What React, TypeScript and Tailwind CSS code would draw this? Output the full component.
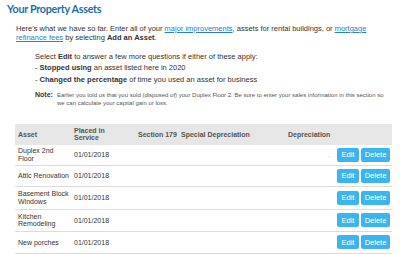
const rows = [
  { name: ["Duplex 2nd", "Floor"], date: "01/01/2018", dep: ".", h: "h-[21px]" },
  { name: ["Attic Renovation"], date: "01/01/2018", dep: "", h: "h-[21px]" },
  { name: ["Basement Block", "Windows"], date: "01/01/2018", dep: "", h: "h-[23px]" },
  { name: ["Kitchen", "Remodeling"], date: "01/01/2018", dep: "", h: "h-[22px]" },
  { name: ["New porches"], date: "01/01/2018", dep: "", h: "h-[22px]" },
];

const cols = "grid grid-cols-[59px_64px_43px_107px_49px_1fr] items-center";

const App = () => {
  return (
    <div className="h-[254px] w-[400px] overflow-hidden bg-white font-['Liberation_Sans',Arial,sans-serif] text-[#333]">
      <h1 className="pl-[7px] pt-[1px] font-['Lato',sans-serif] text-[10.8px] font-bold leading-[15px] tracking-[-0.3px] text-[#1d6fa5]">
        Your Property Assets
      </h1>

      <p className="mt-[8px] pl-[16px] pr-[20px] text-[7.5px] leading-[9px]">
        Here&apos;s what we have so far. Enter all of your{" "}
        <a className="text-[#2b7fcc] underline">major improvements</a>, assets for rental buildings, or{" "}
        <a className="text-[#2b7fcc] underline">mortgage refinance fees</a> by selecting{" "}
        <b>Add an Asset</b>.
      </p>

      <div className="mt-[9px] pl-[35px] text-[7.5px] leading-[11.3px]">
        <p>
          Select <b>Edit</b> to answer a few more questions if either of these apply:
        </p>
        <p>
          - <b>Stopped using</b> an asset listed here in 2020
        </p>
        <p>
          - <b>Changed the percentage</b> of time you used an asset for business
        </p>
      </div>

      <div className="mt-[6px] flex pl-[35px] pr-[10px] text-[6px] leading-[8px] text-[#555]">
        <b className="w-[22px] shrink-0 text-[7px] text-[#333]">Note:</b>
        <p>
          Earlier you told us that you sold (disposed of) your Duplex Floor 2. Be sure to enter your sales
          information in this section so we can calculate your capital gain or loss.
        </p>
      </div>

      <div className="ml-[15px] mt-[17px] w-[377px] text-[7px]">
        <div className={`${cols} h-[21px] bg-[#e6e6e6] font-bold leading-[7.5px] text-[#555]`}>
          <span className="pl-[3px]">Asset</span>
          <span>
            Placed in
            <br />
            Service
          </span>
          <span className="whitespace-nowrap">Section 179</span>
          <span className="whitespace-nowrap">Special Depreciation</span>
          <span>Depreciation</span>
          <span />
        </div>
        {rows.map((r) => (
          <div key={r.name.join(" ")} className={`${cols} ${r.h} border-b border-[#dcdcdc] leading-[7.7px]`}>
            <span className="pl-[3px]">
              {r.name.map((n, i) => (
                <span key={i} className="block whitespace-nowrap">
                  {n}
                </span>
              ))}
            </span>
            <span>{r.date}</span>
            <span />
            <span />
            <span className="pr-[7px] text-right text-[#aaa]">{r.dep}</span>
            <span className="flex justify-end gap-[2px] pr-[2px]">
              <button className="h-[14px] w-[22px] rounded-[2px] bg-[#3cb5ee] text-[7.5px] text-white">Edit</button>
              <button className="h-[14px] w-[29px] rounded-[2px] bg-[#3cb5ee] text-[7.5px] text-white">Delete</button>
            </span>
          </div>
        ))}
      </div>
    </div>
  );
};

export default App;
